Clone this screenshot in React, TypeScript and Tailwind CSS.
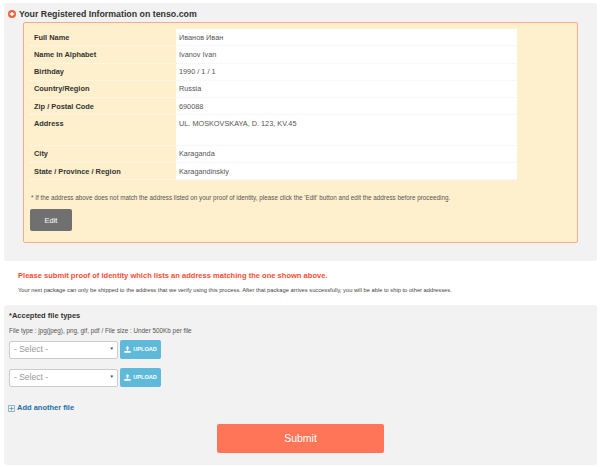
import React from "react";

const rows: [string, string, string?][] = [
  ["Full Name", "Иванов Иван"],
  ["Name in Alphabet", "Ivanov Ivan"],
  ["Birthday", "1990 / 1 / 1"],
  ["Country/Region", "Russia"],
  ["Zip / Postal Code", "690088"],
  ["Address", "UL. MOSKOVSKAYA, D. 123, KV.45", "tall"],
  ["City", "Karaganda"],
  ["State / Province / Region", "Karagandinskiy"],
];

function FileRow() {
  return (
    <div className="flex items-center">
      <div className="flex h-[18px] w-[109px] items-center justify-between rounded-[2px] border border-[#cccccc] bg-white pl-[4px] pr-[3px] text-[8.5px] text-[#999999]">
        <span>- Select -</span>
        <span className="text-[4.5px] text-[#444444]">▼</span>
      </div>
      <div className="ml-[2px] flex h-[19px] w-[41px] items-center justify-center gap-[2px] rounded-[2px] bg-[#5fb9d9] text-[5.6px] font-bold text-white">
        <svg width="7" height="7" viewBox="0 0 14 14" fill="white">
          <path d="M7 0 L11 4.5 H8.5 V9 H5.5 V4.5 H3 Z" />
          <path d="M0.5 10 H13.5 V13.5 H0.5 Z" />
        </svg>
        <span>UPLOAD</span>
      </div>
    </div>
  );
}

export default function App() {
  return (
    <div className="h-[467px] w-[600px] overflow-hidden bg-white pt-[3px] pl-[4px] font-['Liberation_Sans',Arial,sans-serif] text-[#333333]">
      <section className="h-[258px] w-[593px] rounded-[2px] bg-[#f2f2f2] pl-[4px] pt-[5px]">
        <h2 className="flex h-[12px] items-center gap-[3px] text-[8.8px] font-bold leading-none text-[#333333]">
          <svg width="8" height="8" viewBox="0 0 16 16" className="shrink-0">
            <circle cx="8" cy="8" r="8" fill="#f0603c" />
            <path d="M8 4 V12 M3.5 8 H12.5" stroke="white" strokeWidth="3" fill="none" />
          </svg>
          Your Registered Information on tenso.com
        </h2>
        <div className="ml-[15px] mt-[2px] h-[221px] w-[555px] rounded-[2px] border border-[#fbab8c] bg-[#fef0cd] pl-[6px] pt-[6px]">
          <div className="w-[487px]">
            {rows.map(([label, value, tall]) => (
              <div key={label} className={`flex ${tall ? "h-[30.5px]" : "h-[17.25px]"}`}>
                <div className="w-[146px] border-b border-dotted border-[#fffaf0] pl-[4px] pt-[3.5px] text-[7.4px] font-bold leading-[10px] text-[#333333]">
                  {label}
                </div>
                <div className="w-[341px] border-b border-dotted border-[#f2f2f2] bg-white pl-[3px] pt-[3.5px] text-[7.3px] leading-[10px] text-[#555555]">
                  {value}
                </div>
              </div>
            ))}
          </div>
          <p className="mt-[13px] pl-[1px] text-[6.32px] leading-[10px] text-[#555555]">
            * If the address above does not match the address listed on your proof of identity, please click the 'Edit' button and edit the address before proceeding.
          </p>
          <button className="mt-[6px] flex h-[22px] w-[42px] items-center justify-center rounded-[2px] bg-[#707070] text-[7.5px] text-white">
            Edit
          </button>
        </div>
      </section>

      <div className="pl-[14px]">
        <p className="mt-[9px] text-[7.55px] font-bold leading-[12px] text-[#ff4c33]">
          Please submit proof of identity which lists an address matching the one shown above.
        </p>
        <p className="mt-[4px] text-[5.75px] leading-[9px] text-[#444444]">
          Your next package can only be shipped to the address that we verify using this process. After that package arrives successfully, you will be able to ship to other addresses.
        </p>
      </div>

      <section className="mt-[10px] h-[160px] w-[593px] rounded-[3px] bg-[#f2f2f2] pl-[5px] pt-[5px]">
        <h3 className="text-[7.5px] font-bold leading-[11px] text-[#333333]">*Accepted file types</h3>
        <p className="mt-[5px] text-[6.35px] leading-[9px] text-[#555555]">
          File type : jpg(jpeg), png, gif, pdf / File size : Under 500Kb per file
        </p>
        <div className="mt-[5px] flex flex-col gap-[9px]">
          <FileRow />
          <FileRow />
        </div>
        <div className="ml-[-1px] mt-[16px] flex items-center gap-[2px] text-[7.5px] font-bold leading-[10px] text-[#1f6fa5]">
          <svg width="7" height="7" viewBox="0 0 14 14" fill="none" stroke="#3f86ad" strokeWidth="1.3">
            <rect x="0.7" y="0.7" width="12.6" height="12.6" rx="1.5" />
            <path d="M7 3 V11 M3 7 H11" />
          </svg>
          Add another file
        </div>
        <div className="ml-[208px] mt-[11px] flex h-[29px] w-[167px] items-center justify-center rounded-[2px] bg-[#ff7558] text-[10.5px] text-white">
          Submit
        </div>
      </section>
    </div>
  );
}
